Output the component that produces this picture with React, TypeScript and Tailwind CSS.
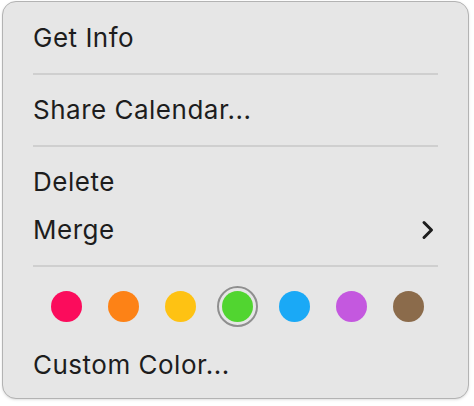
const swatches = [
  { name: 'red', color: 'bg-[#fb0c5c]' },
  { name: 'orange', color: 'bg-[#fd8216]' },
  { name: 'yellow', color: 'bg-[#fec213]' },
  { name: 'green', color: 'bg-[#51d530]', selected: true },
  { name: 'blue', color: 'bg-[#1aa9f6]' },
  { name: 'purple', color: 'bg-[#c458df]' },
  { name: 'brown', color: 'bg-[#8b6b4b]' },
];

function Chevron() {
  return (
    <svg width="14" height="20" viewBox="0 0 14 20" className="mr-[3px]" fill="none">
      <path d="M3 2.5 L10.5 10 L3 17.5" stroke="#1d1d1d" strokeWidth="3" strokeLinecap="round" strokeLinejoin="round" />
    </svg>
  );
}

function MenuItem({ label, submenu }: { label: string; submenu?: boolean }) {
  return (
    <div className="flex h-[48px] items-center justify-between">
      <span>{label}</span>
      {submenu && <Chevron />}
    </div>
  );
}

function Separator() {
  return (
    <div className="flex h-[24px] items-center">
      <div className="h-[2px] w-full bg-[#cfcfcf]" />
    </div>
  );
}

export default function App() {
  return (
    <div className="min-h-screen bg-white pl-[2px] pt-[1px]">
      <div
        className="h-[398px] w-[467px] rounded-[14px] border border-[#b3b3b3] bg-[#e6e6e6] px-[30px] pt-[12px] text-[26px] leading-none tracking-[0.5px] text-[#1d1d1d] shadow-sm"
        style={{ fontFamily: 'Inter, "Liberation Sans", sans-serif' }}
      >
        <MenuItem label="Get Info" />
        <Separator />
        <MenuItem label="Share Calendar..." />
        <Separator />
        <MenuItem label="Delete" />
        <MenuItem label="Merge" submenu />
        <Separator />

        {/* colour swatches */}
        <div className="flex h-[56px] items-center gap-[16px] pl-[13px]">
          {swatches.map((s) => (
            <div key={s.name} className="flex h-[41px] w-[41px] items-center justify-center">
              {s.selected ? (
                <div className="flex h-[41px] w-[41px] items-center justify-center rounded-full border-2 border-[#8f8f8f]">
                  <div className={`h-[31px] w-[31px] rounded-full ${s.color}`} />
                </div>
              ) : (
                <div className={`h-[31px] w-[31px] rounded-full ${s.color}`} />
              )}
            </div>
          ))}
        </div>

        <div className="mt-[7px]">
          <MenuItem label="Custom Color..." />
        </div>
      </div>
    </div>
  );
}
